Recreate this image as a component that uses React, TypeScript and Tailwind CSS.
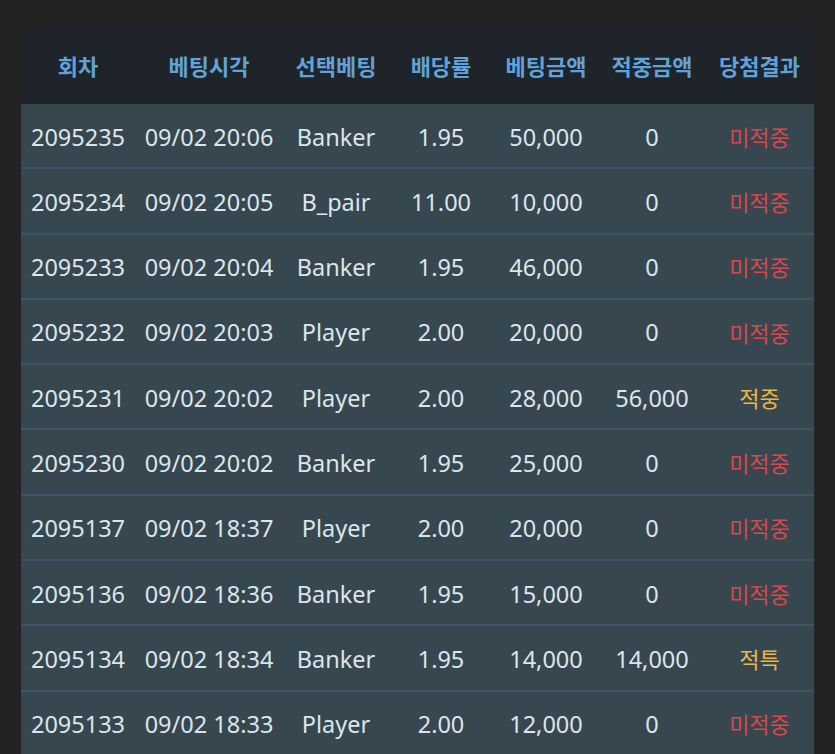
import React from 'react'

type Row = {
  round: string
  time: string
  pick: string
  odds: string
  bet: string
  win: string
  result: '미적중' | '적중' | '적특'
}

const rows: Row[] = [
  { round: '2095235', time: '09/02 20:06', pick: 'Banker', odds: '1.95', bet: '50,000', win: '0', result: '미적중' },
  { round: '2095234', time: '09/02 20:05', pick: 'B_pair', odds: '11.00', bet: '10,000', win: '0', result: '미적중' },
  { round: '2095233', time: '09/02 20:04', pick: 'Banker', odds: '1.95', bet: '46,000', win: '0', result: '미적중' },
  { round: '2095232', time: '09/02 20:03', pick: 'Player', odds: '2.00', bet: '20,000', win: '0', result: '미적중' },
  { round: '2095231', time: '09/02 20:02', pick: 'Player', odds: '2.00', bet: '28,000', win: '56,000', result: '적중' },
  { round: '2095230', time: '09/02 20:02', pick: 'Banker', odds: '1.95', bet: '25,000', win: '0', result: '미적중' },
  { round: '2095137', time: '09/02 18:37', pick: 'Player', odds: '2.00', bet: '20,000', win: '0', result: '미적중' },
  { round: '2095136', time: '09/02 18:36', pick: 'Banker', odds: '1.95', bet: '15,000', win: '0', result: '미적중' },
  { round: '2095134', time: '09/02 18:34', pick: 'Banker', odds: '1.95', bet: '14,000', win: '14,000', result: '적특' },
  { round: '2095133', time: '09/02 18:33', pick: 'Player', odds: '2.00', bet: '12,000', win: '0', result: '미적중' },
]

const headers = ['회차', '베팅시각', '선택베팅', '배당률', '베팅금액', '적중금액', '당첨결과']

const cols = 'grid grid-cols-[114px_148px_106px_104px_106px_106px_109px]'

const App: React.FC = () => {
  return (
    <div className="min-h-screen bg-[#232323] pl-[21px] pt-[29px] font-['Noto_Sans','Noto_Sans_CJK_KR',sans-serif]">
      <div className="w-[793px]">
        <div className={`${cols} h-[75px] items-center bg-[#1e242a] text-[22px] font-bold text-[#61a2d8]`}>
          {headers.map((h) => (
            <div key={h} className="text-center">
              {h}
            </div>
          ))}
        </div>
        {rows.map((r) => (
          <div
            key={r.round}
            className={`${cols} h-[65.3px] items-center border-b-2 border-[#3b5566] bg-[#37474f] pt-[3px] text-[23.5px] text-[#dbe5ec]`}
          >
            <div className="text-center">{r.round}</div>
            <div className="text-center">{r.time}</div>
            <div className="text-center">{r.pick}</div>
            <div className="text-center">{r.odds}</div>
            <div className="text-center">{r.bet}</div>
            <div className="text-center">{r.win}</div>
            <div
              className={`text-center text-[22px] ${
                r.result === '미적중' ? 'text-[#dc464c]' : 'text-[#eab646]'
              }`}
            >
              {r.result}
            </div>
          </div>
        ))}
      </div>
    </div>
  )
}

export default App
